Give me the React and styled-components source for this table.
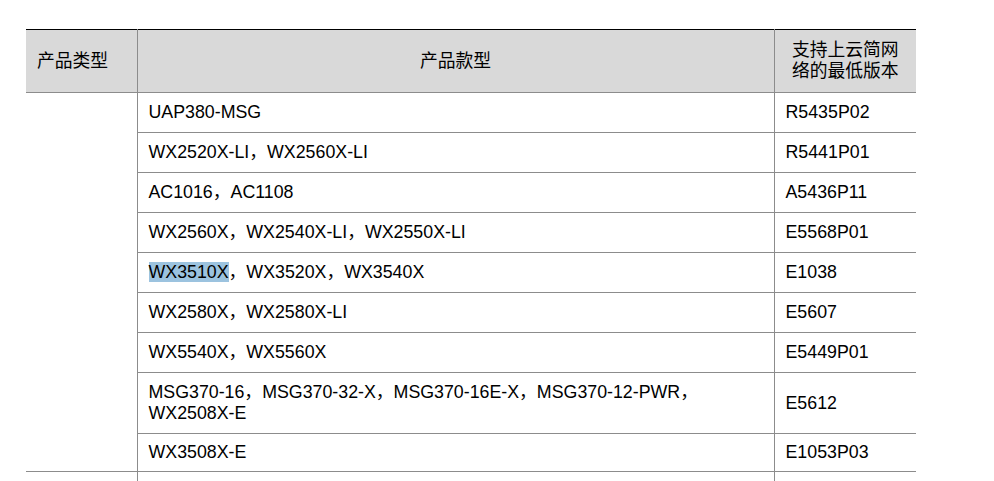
import React from 'react';
import styled, { createGlobalStyle } from 'styled-components';

const GlobalStyle = createGlobalStyle`
  html, body {
    margin: 0;
    padding: 0;
    background: #ffffff;
    height: 481px;
    overflow: hidden;
  }
  body {
    font-family: "Liberation Sans", "Noto Sans CJK SC", sans-serif;
    color: #000;
  }
`;

const Page = styled.div`
  padding: 29px 0 0 26px;
`;

const Table = styled.table`
  border-collapse: collapse;
  table-layout: fixed;
  width: 890px;
  font-size: 17.8px;
  line-height: 21px;
`;

const HeadRow = styled.tr`
  height: 63px;
  background: #d9d9d9;
  border-top: 1px solid #000;
`;

const Row = styled.tr`
  height: ${({ $h }) => $h || 40}px;
`;

const Th = styled.th`
  font-weight: normal;
  text-align: ${({ $align }) => $align || 'left'};
  vertical-align: middle;
  padding: 0 ${({ $pad }) => $pad ?? 11}px;
  border-bottom: 1px solid #8c8c8c;
  border-left: ${({ $first }) => ($first ? 'none' : '1px solid #8c8c8c')};
`;

const Td = styled.td`
  vertical-align: middle;
  padding: 0 11px;
  border-bottom: ${({ $open }) => ($open ? 'none' : '1px solid #8c8c8c')};
  border-left: ${({ $first }) => ($first ? 'none' : '1px solid #8c8c8c')};
`;

const Mark = styled.span`
  background: #9cc3df;
`;

const rows = [
  { model: 'UAP380-MSG', ver: 'R5435P02' },
  { model: 'WX2520X-LI，WX2560X-LI', ver: 'R5441P01' },
  { model: 'AC1016，AC1108', ver: 'A5436P11' },
  { model: 'WX2560X，WX2540X-LI，WX2550X-LI', ver: 'E5568P01' },
  { model: <><Mark>WX3510X</Mark>，WX3520X，WX3540X</>, ver: 'E1038' },
  { model: 'WX2580X，WX2580X-LI', ver: 'E5607' },
  { model: 'WX5540X，WX5560X', ver: 'E5449P01' },
  {
    model: <>MSG370-16，MSG370-32-X，MSG370-16E-X，MSG370-12-PWR，<br />WX2508X-E</>,
    ver: 'E5612',
    h: 61,
  },
  { model: 'WX3508X-E', ver: 'E1053P03', h: 38 },
];

export default function App() {
  return (
    <Page>
      <GlobalStyle />
      <Table>
        <colgroup>
          <col style={{ width: 111 }} />
          <col style={{ width: 637 }} />
          <col style={{ width: 142 }} />
        </colgroup>
        <thead>
          <HeadRow>
            <Th $first>产品类型</Th>
            <Th $align="center">产品款型</Th>
            <Th $align="center" $pad={12}>支持上云简网络的最低版本</Th>
          </HeadRow>
        </thead>
        <tbody>
          {rows.map((r, i) => (
            <Row key={i} $h={r.h}>
              {i === 0 && <Td $first rowSpan={rows.length} />}
              <Td>{r.model}</Td>
              <Td>{r.ver}</Td>
            </Row>
          ))}
          <Row $h={9}>
            <Td $first $open />
            <Td $open />
            <Td $open />
          </Row>
        </tbody>
      </Table>
    </Page>
  );
}
